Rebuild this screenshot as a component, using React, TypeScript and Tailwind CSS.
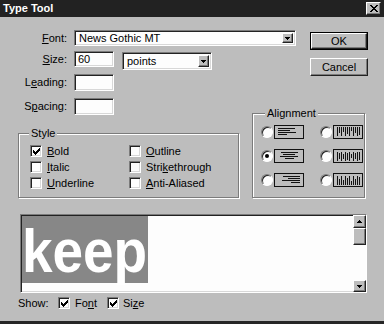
import React from 'react';

const sunken =
  'border border-t-[#7b7b7b] border-l-[#7b7b7b] border-r-white border-b-white shadow-[inset_1px_1px_0_#222,inset_-1px_-1px_0_#d8d8d8]';
const raised =
  'border border-t-white border-l-white border-r-[#222] border-b-[#222] shadow-[inset_-1px_-1px_0_#7b7b7b]';
const etched = 'border border-[#7b7b7b] shadow-[1px_1px_0_#fff,inset_1px_1px_0_#fff]';

function U({ children }: { children: React.ReactNode }) {
  return <span className="underline">{children}</span>;
}

function Arrow({ up }: { up?: boolean }) {
  return (
    <svg width="5" height="3" viewBox="0 0 5 3" shapeRendering="crispEdges">
      <path d={up ? 'M2 0h1v1h1v1h1v1H0V2h1V1h1z' : 'M0 0h5v1H4v1H3v1H2V2H1V1H0z'} fill="#000" />
    </svg>
  );
}

function Combo({ value, w, h }: { value: string; w: string; h: string }) {
  return (
    <div className={`${w} ${h} bg-[#fdfdfd] flex items-stretch p-[2px] ${sunken}`}>
      <span className="flex-1 pl-[2px] flex items-center leading-none">{value}</span>
      <span className={`w-[11px] bg-[#bdbdbd] flex items-center justify-center ${raised}`}>
        <Arrow />
      </span>
    </div>
  );
}

function Check({ checked }: { checked?: boolean }) {
  return (
    <span className={`w-[12px] h-[12px] bg-[#fdfdfd] flex items-center justify-center shrink-0 ${sunken}`}>
      {checked && (
        <svg width="7" height="7" viewBox="0 0 7 7" shapeRendering="crispEdges">
          <path d="M6 0h1v3H6v1H5v1H4v1H3v1H2V6H1V5H0V2h1v1h1v1h1V3h1V2h1V1h1z" fill="#000" />
        </svg>
      )}
    </span>
  );
}

function Radio({ on }: { on?: boolean }) {
  return (
    <span className="w-[12px] h-[12px] rounded-full bg-[#fdfdfd] border border-t-[#7b7b7b] border-l-[#7b7b7b] border-r-white border-b-white shadow-[inset_1px_1px_0_#222] flex items-center justify-center shrink-0">
      {on && <span className="w-[4px] h-[4px] rounded-full bg-black" />}
    </span>
  );
}

function HIcon({ align }: { align: 'left' | 'center' | 'right' }) {
  const lens = [17, 12, 18, 9];
  return (
    <svg width="30" height="14" viewBox="0 0 30 14" shapeRendering="crispEdges">
      <rect x="0.5" y="0.5" width="29" height="13" fill="#bdbdbd" stroke="#111" />
      {lens.map((l, i) => {
        const x = align === 'left' ? 4 : align === 'right' ? 26 - l : Math.round(15 - l / 2);
        return <line key={i} x1={x} x2={x + l} y1={3.5 + i * 2} y2={3.5 + i * 2} stroke="#111" />;
      })}
    </svg>
  );
}

function VIcon({ align }: { align: 'top' | 'center' | 'bottom' }) {
  const lens = [9, 6, 9, 5, 9, 7, 9, 4, 9, 6, 9, 8];
  return (
    <svg width="30" height="14" viewBox="0 0 30 14" shapeRendering="crispEdges">
      <rect x="0.5" y="0.5" width="29" height="13" fill="#bdbdbd" stroke="#111" />
      {lens.map((l, i) => {
        const y1 = align === 'top' ? 2 : align === 'bottom' ? 12 - l : Math.round(7 - l / 2);
        const x = 4.5 + i * 2;
        return <line key={i} x1={x} x2={x} y1={y1} y2={y1 + l} stroke="#111" />;
      })}
    </svg>
  );
}

export default function App() {
  return (
    <div className="w-[384px] h-[324px] bg-[#bdbdbd] font-['Liberation_Sans',Arial,sans-serif] text-[11px] text-black flex flex-col border-b-[3px] border-[#262626] overflow-hidden">
      {/* Title bar */}
      <div className="h-[17px] bg-[#222] flex items-center justify-between pl-[3px] pr-[3px] shrink-0">
        <span className="text-white font-bold text-[11px] leading-none">Type Tool</span>
        <span className={`w-[15px] h-[13px] bg-[#bdbdbd] flex items-center justify-center ${raised}`}>
          <svg width="8" height="7" viewBox="0 0 8 7" shapeRendering="crispEdges">
            <path d="M0 0h2v1h1v1h2V1h1V0h2v1H7v1H6v1H5v1h1v1h1v1h1v1H6V6H5V5H3v1H2v1H0V6h1V5h1V4h1V3H2V2H1V1H0z" fill="#000" />
          </svg>
        </span>
      </div>

      {/* Font / Size + buttons */}
      <div className="flex pt-[13px]">
        <div className="flex flex-col">
          <div className="flex items-center h-[16px]">
            <span className="w-[67px] text-right">
              <U>F</U>ont:
            </span>
            <div className="ml-[7px]">
              <Combo value="News Gothic MT" w="w-[222px]" h="h-[16px]" />
            </div>
          </div>
          <div className="flex items-start mt-[5px]">
            <span className="w-[67px] text-right h-[16px] flex items-center justify-end">
              <U>S</U>ize:
            </span>
            <div className={`ml-[7px] w-[40px] h-[16px] bg-[#fdfdfd] flex items-center pl-[3px] ${sunken}`}>60</div>
            <div className="ml-[8px] mt-[1px]">
              <Combo value="points" w="w-[90px]" h="h-[18px]" />
            </div>
          </div>
        </div>
        <div className="ml-[14px] mt-[2px] flex flex-col">
          <div className="w-[58px] h-[18px] border border-black">
            <div className={`w-full h-full bg-[#bdbdbd] flex items-center justify-center ${raised}`}>OK</div>
          </div>
          <div className={`mt-[8px] w-[58px] h-[18px] bg-[#bdbdbd] flex items-center justify-center ${raised}`}>Cancel</div>
        </div>
      </div>

      {/* Leading / Spacing / Style + Alignment */}
      <div className="flex items-start mt-[-2px]">
        <div className="flex flex-col">
          <div className="flex items-center h-[17px]">
            <span className="w-[67px] text-right">
              L<U>e</U>ading:
            </span>
            <div className={`ml-[7px] w-[40px] h-[17px] bg-[#fdfdfd] ${sunken}`} />
          </div>
          <div className="flex items-center h-[17px] mt-[7px]">
            <span className="w-[67px] text-right">
              S<U>p</U>acing:
            </span>
            <div className={`ml-[7px] w-[40px] h-[17px] bg-[#fdfdfd] ${sunken}`} />
          </div>
          <div className={`relative ml-[18px] mt-[18px] w-[221px] h-[65px] pt-[11px] pl-[11px] ${etched}`}>
            <span className="absolute left-[10px] top-[-8px] px-[2px] bg-[#bdbdbd] leading-[14px]">Style</span>
            <div className="grid grid-cols-[99px_auto] gap-y-[4px]">
              <label className="flex items-center gap-[5px] h-[12px]">
                <Check checked />
                <span>
                  <U>B</U>old
                </span>
              </label>
              <label className="flex items-center gap-[5px] h-[12px]">
                <Check />
                <span>
                  <U>O</U>utline
                </span>
              </label>
              <label className="flex items-center gap-[5px] h-[12px]">
                <Check />
                <span>
                  <U>I</U>talic
                </span>
              </label>
              <label className="flex items-center gap-[5px] h-[12px]">
                <Check />
                <span>
                  Stri<U>k</U>ethrough
                </span>
              </label>
              <label className="flex items-center gap-[5px] h-[12px]">
                <Check />
                <span>
                  <U>U</U>nderline
                </span>
              </label>
              <label className="flex items-center gap-[5px] h-[12px]">
                <Check />
                <span>
                  <U>A</U>nti-Aliased
                </span>
              </label>
            </div>
          </div>
        </div>
        <div className={`relative ml-[13px] mt-[39px] w-[113px] h-[85px] pt-[11px] pl-[8px] ${etched}`}>
          <span className="absolute left-[12px] top-[-8px] px-[2px] bg-[#bdbdbd] leading-[14px]">Alignment</span>
          <div className="flex flex-col gap-[10px]">
            {(
              [
                ['left', 'top', false],
                ['center', 'center', true],
                ['right', 'bottom', false],
              ] as const
            ).map(([h, v, on]) => (
              <div key={h} className="flex items-center h-[14px]">
                <Radio on={on} />
                <span className="ml-[1px]">
                  <HIcon align={h} />
                </span>
                <span className="ml-[16px]">
                  <Radio />
                </span>
                <span className="ml-[1px]">
                  <VIcon align={v} />
                </span>
              </div>
            ))}
          </div>
        </div>
      </div>

      {/* Preview */}
      <div className={`mt-[16px] ml-[20px] w-[347px] h-[79px] bg-[#fdfdfd] flex ${sunken}`}>
        <div className="flex-1 pl-[1px] pt-[1px]">
          <div className="w-[126px] h-[67px] bg-[#878787]">
            <span className="block origin-left scale-x-[0.9] text-white font-bold text-[61px] leading-[70px]">keep</span>
          </div>
        </div>
        <div className="w-[13px] flex flex-col">
          <div className={`h-[13px] bg-[#bdbdbd] flex items-center justify-center ${raised}`}>
            <Arrow up />
          </div>
          <div className={`h-[17px] bg-[#bdbdbd] ${raised}`} />
          <div className="flex-1 bg-[#fdfdfd]" />
          <div className={`h-[12px] bg-[#bdbdbd] flex items-center justify-center ${raised}`}>
            <Arrow />
          </div>
        </div>
      </div>

      {/* Show row */}
      <div className="flex items-center mt-[4px] h-[12px] pl-[18px]">
        <span className="w-[40px]">Show:</span>
        <Check checked />
        <span className="ml-[5px] w-[32px]">
          Fo<U>n</U>t
        </span>
        <Check checked />
        <span className="ml-[4px]">
          Si<U>z</U>e
        </span>
      </div>
    </div>
  );
}
